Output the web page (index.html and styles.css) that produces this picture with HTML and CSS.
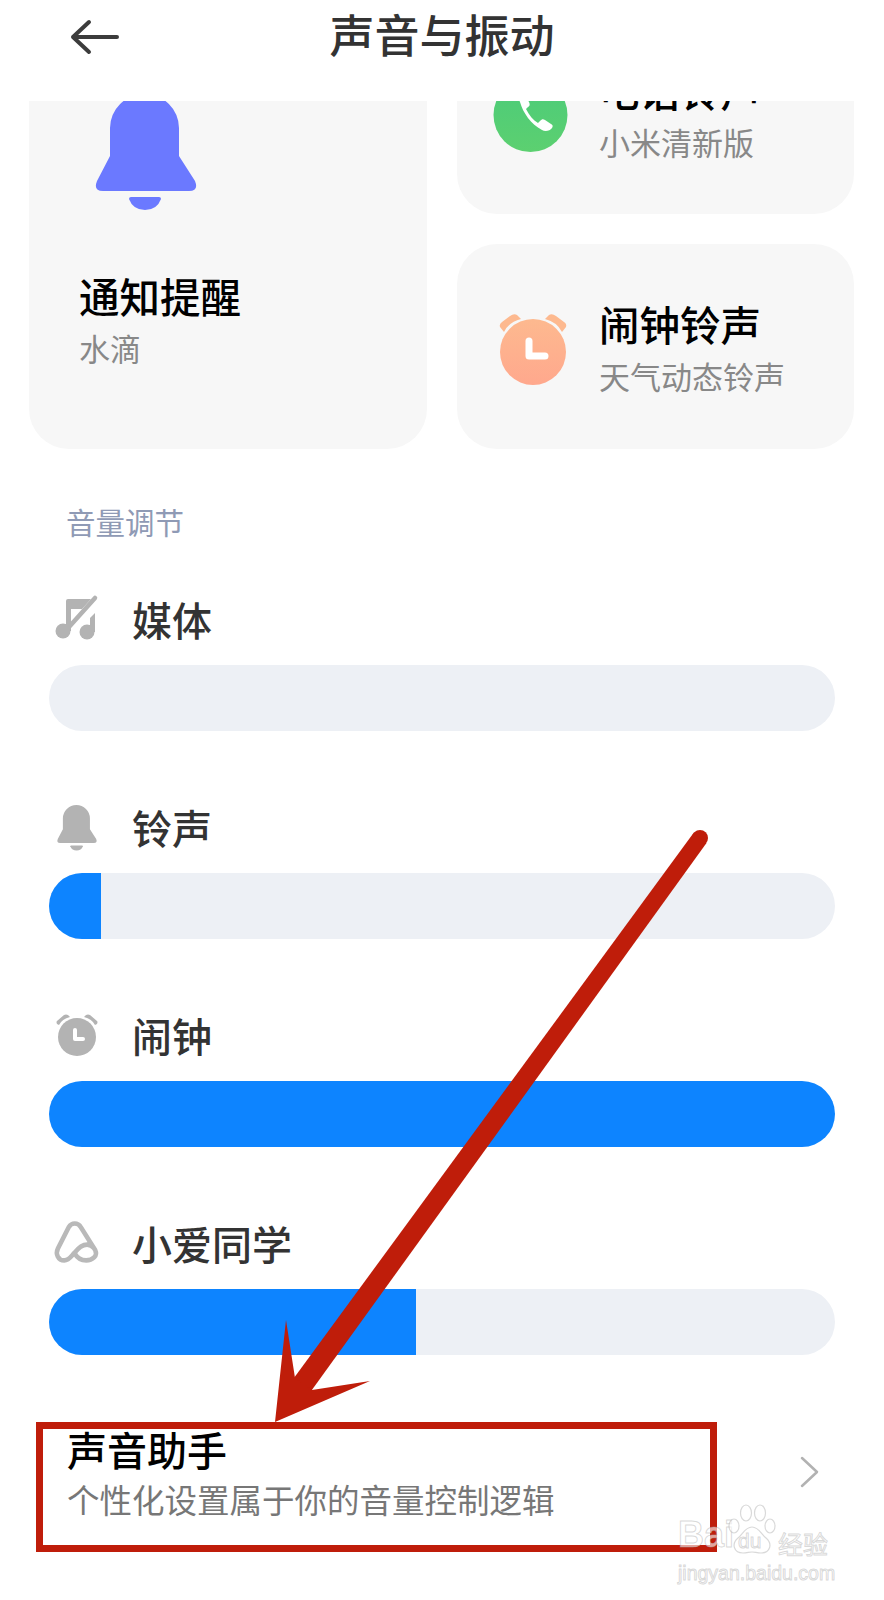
FILE: index.html
```html
<!DOCTYPE html>
<html lang="zh-CN">

<head>
    <meta charset="UTF-8">
    <meta name="viewport" content="width=device-width, initial-scale=1.0">
    <title>声音与振动</title>
    <link rel="stylesheet" href="styles.css">
</head>

<body>
    <div class="page">
        <header class="topbar">
            <svg class="back" viewBox="0 0 50 36" width="50" height="36">
                <path d="M3 18H47M19 3L3 18L19 33" fill="none" stroke="#3c3c3c" stroke-width="4" stroke-linecap="round" stroke-linejoin="round" />
            </svg>
            <h1>声音与振动</h1>
        </header>

        <!-- the cards are scrolled under the top bar -->
        <div class="card-clip">
            <div class="cards">
                <div class="card card-tall">
                    <svg class="bell-big" viewBox="0 0 102 116" width="102" height="116">
                        <path d="M15 34a34.500 34 0 0 1 69 0V62L100 87q4 10-6 10H8q-10 0-6-10L15 62Z" fill="#6b79ff" />
                        <path d="M34 105q0-2 2-2H64q2 0 2 2Q62 116 50 116T34 105Z" fill="#6b79ff" />
                    </svg>
                    <div class="card-title">通知提醒</div>
                    <div class="card-sub">水滴</div>
                </div>
                <div class="card card-row">
                    <svg class="card-icon" viewBox="0 0 76 76" width="76" height="76">
                        <defs>
                            <linearGradient id="green" x1="0" y1="0" x2="0" y2="1">
                                <stop offset="0" stop-color="#4bcb7a" />
                                <stop offset="1" stop-color="#5cd070" />
                            </linearGradient>
                        </defs>
                        <circle cx="38.500" cy="37" r="37" fill="url(#green)" />
                        <path d="M28 24C31 35 39 46 50 52C53 54 58 53 60 50C61 48 61 47 59 46L53 42C51 41 50 41 48 43L46 45C41 42 37 37 34 31L36 29C38 28 38 26 37 24L33 17C32 15 30 15 28 17C26 19 27 22 28 24Z" fill="#fff" />
                    </svg>
                    <div>
                        <div class="card-title">电话铃声</div>
                        <div class="card-sub">小米清新版</div>
                    </div>
                </div>
                <div class="card card-row">
                    <svg class="card-icon" viewBox="0 0 76 76" width="76" height="76">
                        <defs>
                            <linearGradient id="orange" x1="0" y1="0" x2="0" y2="1">
                                <stop offset="0" stop-color="#fdb98f" />
                                <stop offset="1" stop-color="#ffa88d" />
                            </linearGradient>
                        </defs>
                        <g transform="translate(3 -2)">
                            <circle cx="38" cy="42" r="33" fill="url(#orange)" />
                            <path d="M5 17Q4 14 7 12L15 6Q19 3 22 5L26 9Q14 12 9 22Z" fill="#fdb98f" />
                            <path d="M71 17Q72 14 69 12L61 6Q57 3 54 5L50 9Q62 12 67 22Z" fill="#fdb98f" />
                            <path d="M34 31V46H50" fill="none" stroke="#fff" stroke-width="7" stroke-linecap="round" stroke-linejoin="round" />
                        </g>
                    </svg>
                    <div>
                        <div class="card-title">闹钟铃声</div>
                        <div class="card-sub">天气动态铃声</div>
                    </div>
                </div>
            </div>
        </div>

        <div class="section-label">音量调节</div>

        <section class="volumes">
            <div class="volume">
                <div class="volume-head">
                    <svg class="volume-icon" viewBox="0 0 54 50" width="54" height="50">
                        <path d="M16 7Q16 5 18 5H41L32 15H21V37H16Z" fill="#b3b3b3" />
                        <path d="M45 4L19 33" stroke="#b3b3b3" stroke-width="4.500" stroke-linecap="round" />
                        <circle cx="13" cy="37" r="7.500" fill="#b3b3b3" />
                        <circle cx="37" cy="38" r="7.500" fill="#b3b3b3" />
                        <path d="M40 24L45 19V38H40Z" fill="#b3b3b3" />
                    </svg>
                    <span>媒体</span>
                </div>
                <div class="track"></div>
            </div>
            <div class="volume">
                <div class="volume-head">
                    <svg class="volume-icon" viewBox="0 0 54 50" width="54" height="50">
                        <g transform="translate(7 3) scale(0.392)" fill="#b3b3b3">
                            <path d="M15 34a34.500 34 0 0 1 69 0V62L100 87q4 10-6 10H8q-10 0-6-10L15 62Z" />
                            <path d="M34 105q0-2 2-2H64q2 0 2 2Q62 116 50 116T34 105Z" />
                        </g>
                    </svg>
                    <span>铃声</span>
                </div>
                <div class="track">
                    <div class="fill" style="width: 52px"></div>
                </div>
            </div>
            <div class="volume">
                <div class="volume-head">
                    <svg class="volume-icon" viewBox="0 0 54 50" width="54" height="50">
                        <circle cx="27" cy="27" r="19" fill="#b3b3b3" />
                        <path d="M7 11L14 5Q16 4 18 5L20 7Q12 9 9 15L7 14Q6 12 7 11Z" fill="#b3b3b3" />
                        <path d="M47 11L40 5Q38 4 36 5L34 7Q42 9 45 15L47 14Q48 12 47 11Z" fill="#b3b3b3" />
                        <path d="M25 20V29H33" fill="none" stroke="#fff" stroke-width="4" stroke-linecap="round" stroke-linejoin="round" />
                    </svg>
                    <span>闹钟</span>
                </div>
                <div class="track">
                    <div class="fill" style="width: 100%"></div>
                </div>
            </div>
            <div class="volume">
                <div class="volume-head">
                    <svg class="volume-icon" viewBox="0 0 54 50" width="54" height="50">
                        <path transform="translate(2.500 1.500) scale(0.91 0.93)" d="M24 36C27 41 31 44 37 44C44 44 50 39 47 33L31 8C28 3 21 3 18 8L6 31C3 37 6 44 13 44C18 44 21 39 24 36C28 31 32 27 38 27C41 27 44 29 46 31" fill="none" stroke="#b9b9b9" stroke-width="5" stroke-linecap="round" />
                    </svg>
                    <span>小爱同学</span>
                </div>
                <div class="track">
                    <div class="fill" style="width: 367px"></div>
                </div>
            </div>
        </section>

        <div class="assistant">
            <div>
                <div class="assistant-title">声音助手</div>
                <div class="assistant-sub">个性化设置属于你的音量控制逻辑</div>
            </div>
            <svg class="chevron" viewBox="0 0 20 32" width="20" height="32">
                <path d="M2 2L17 16L2 30" fill="none" stroke="#b2b2b2" stroke-width="2.500" stroke-linecap="round" stroke-linejoin="round" />
            </svg>
        </div>

        <!-- red annotation drawn over the screenshot -->
        <svg class="annotation" viewBox="0 0 884 1600" width="884" height="1600">
            <rect x="39.500" y="1425.500" width="674" height="123" fill="none" stroke="#bf1d0a" stroke-width="7" />
            <circle cx="700" cy="838" r="8" fill="#bf1d0a" />
            <path d="M706.500 843L309 1394L291 1382L693.500 833Z" fill="#bf1d0a" />
            <path d="M275 1422L286 1320L295 1378L312 1390L370 1381Z" fill="#bf1d0a" />
        </svg>

        <div class="watermark">
            <div class="wm-top">
                <span class="wm-bai">Bai</span>
                <span class="wm-paw">
                    <svg viewBox="0 0 48 56" width="48" height="56">
                        <g fill="rgba(255,255,255,0.55)" stroke="rgba(170,170,170,0.45)" stroke-width="1.200">
                            <ellipse cx="6" cy="23" rx="5" ry="7" />
                            <ellipse cx="18" cy="10" rx="5.500" ry="8" />
                            <ellipse cx="32" cy="10" rx="5.500" ry="8" />
                            <ellipse cx="42" cy="23" rx="5" ry="7" />
                            <path d="M24 24C31 24 33 31 38 35C45 41 42 50 33 50C29 50 27 49 24 49C21 49 19 50 15 50C6 50 3 41 10 35C15 31 17 24 24 24Z" />
                        </g>
                    </svg>
                    <span class="wm-du">du</span>
                </span>
                <span class="wm-cn">经验</span>
            </div>
            <div class="wm-url">jingyan.baidu.com</div>
        </div>
    </div>
</body>

</html>
```

FILE: styles.css
```css
* {
    box-sizing: border-box;
}

body {
    margin: 0;
    background-color: #fff;
    font-family: "Noto Sans CJK SC", "Noto Sans", sans-serif;
    color: #333;
}

.page {
    position: relative;
    width: 884px;
    height: 1600px;
    overflow: hidden;
    background-color: #fff;
}

.topbar {
    position: relative;
    height: 101px;
    padding: 19px 0 0 70px;
}

.back {
    display: block;
}

.topbar h1 {
    position: absolute;
    top: 4px;
    left: 0;
    width: 100%;
    margin: 0;
    font-size: 45px;
    line-height: 60px;
    font-weight: 500;
    text-align: center;
    color: #333;
}

.card-clip {
    height: 348px;
    overflow: hidden;
}

.cards {
    display: grid;
    grid-template-columns: 398px 397px;
    grid-template-rows: 204px 205px;
    column-gap: 30px;
    row-gap: 30px;
    margin-top: -91px;
    padding-left: 29px;
}

.card {
    background-color: #f7f7f7;
    border-radius: 40px;
}

.card-tall {
    grid-row: 1 / span 2;
    padding: 84px 0 0 50px;
}

.bell-big {
    display: block;
    margin: 0 0 60px 16px;
}

.card-row {
    display: flex;
    align-items: center;
    padding-left: 35px;
    padding-top: 7px;
    gap: 31px;
}

.card-icon {
    flex: none;
}

.card-title {
    font-size: 40.500px;
    line-height: 52px;
    font-weight: 500;
    color: #000;
}

.card-sub {
    font-size: 31px;
    line-height: 52px;
    color: #888;
}

.section-label {
    margin: 52px 0 0 66px;
    font-size: 29.500px;
    line-height: 40px;
    color: #8f9ab5;
}

.volumes {
    margin-top: 52px;
    padding: 0 49px;
}

.volume {
    margin-bottom: 70px;
}

.volume-head {
    display: flex;
    align-items: center;
    height: 52px;
    margin: 0 0 20px 1px;
    gap: 28px;
    font-size: 40px;
    font-weight: 500;
}

.volume-icon {
    flex: none;
}

.track {
    height: 66px;
    border-radius: 33px;
    background-color: #edf0f5;
    overflow: hidden;
}

.fill {
    height: 100%;
    background-color: #0d84ff;
}

.assistant {
    display: flex;
    align-items: center;
    justify-content: space-between;
    margin-top: 18px;
    padding: 0 64px 0 67px;
}

.assistant-title {
    font-size: 40px;
    line-height: 48px;
    font-weight: 500;
    color: #000;
}

.assistant-sub {
    margin-top: 4px;
    font-size: 32.500px;
    line-height: 44px;
    color: #777;
}

.chevron {
    margin-top: -3px;
}

.annotation {
    position: absolute;
    top: 0;
    left: 0;
}

.watermark {
    position: absolute;
    top: 1503px;
    left: 678px;
    width: 160px;
}

.wm-top {
    display: flex;
    align-items: flex-end;
    height: 56px;
}

.wm-bai,
.wm-cn,
.wm-url,
.wm-du {
    color: rgba(255, 255, 255, 0.6);
    -webkit-text-stroke: 1px rgba(170, 170, 170, 0.45);
}

.wm-bai {
    font-family: "Liberation Sans", sans-serif;
    font-size: 36px;
    line-height: 48px;
    font-weight: 700;
    width: 53px;
}

.wm-paw {
    position: relative;
    width: 48px;
    height: 56px;
    margin-left: -3px;
}

.wm-du {
    position: absolute;
    left: 10px;
    top: 26px;
    font-family: "Liberation Sans", sans-serif;
    font-size: 21px;
    line-height: 24px;
}

.wm-cn {
    margin-left: 2px;
    font-size: 25px;
    line-height: 32px;
}

.wm-url {
    margin-top: 3px;
    font-family: "Liberation Sans", sans-serif;
    font-size: 19.500px;
    line-height: 22px;
    white-space: nowrap;
}
```
